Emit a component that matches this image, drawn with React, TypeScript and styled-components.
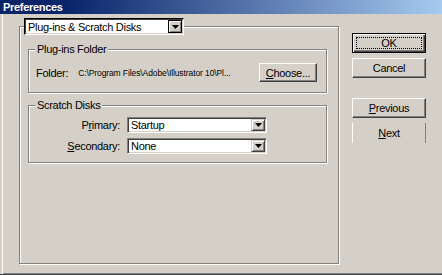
import React from 'react'
import styled, { createGlobalStyle } from 'styled-components'

const Colors = {
  Face: '#d4d0c8',
  Shadow: '#808080',
  DarkShadow: '#404040',
  Light: '#ffffff',
}

const GlobalStyle = createGlobalStyle`
  html, body {
    margin: 0;
    padding: 0;
    background: ${Colors.Face};
  }
  body {
    font-family: "Liberation Sans", Arial, sans-serif;
    font-size: 11px;
    letter-spacing: -0.3px;
    color: #000;
  }
`

const Arrow: React.FC = () => (
  <svg width="7" height="4" viewBox="0 0 7 4">
    <polygon points="0,0 7,0 3.5,4" fill="#000" />
  </svg>
)

interface ComboProps {
  value: string
  width: number
  height: number
  focused?: boolean
}

const Combo: React.FC<ComboProps> = ({ value, width, height, focused }) => (
  <ComboBox width={width} height={height} focused={focused}>
    <ComboText>{value}</ComboText>
    <ComboButton focused={focused}>
      <Arrow />
    </ComboButton>
  </ComboBox>
)

export default function App() {
  return (
    <>
      <GlobalStyle />
      <Window>
        <TitleBar>Preferences</TitleBar>
        <Body>
          <MainGroup>
            <MainLegend>
              <Combo value="Plug-ins & Scratch Disks" width={160} height={17} focused />
            </MainLegend>

            <Group>
              <GroupLegend>Plug-ins Folder</GroupLegend>
              <FolderRow>
                <span>Folder:</span>
                <PathText>C:\Program Files\Adobe\Illustrator 10\Pl...</PathText>
                <PushButton width={58} height={19}>
                  <u>C</u>hoose...
                </PushButton>
              </FolderRow>
            </Group>

            <Group spaced>
              <GroupLegend>Scratch Disks</GroupLegend>
              <DiskGrid>
                <FieldLabel>
                  P<u>r</u>imary:
                </FieldLabel>
                <Combo value="Startup" width={140} height={16} />
                <FieldLabel>
                  <u>S</u>econdary:
                </FieldLabel>
                <Combo value="None" width={140} height={16} />
              </DiskGrid>
            </Group>
          </MainGroup>

          <ButtonColumn>
            <DefaultButton>
              <FocusRect>OK</FocusRect>
            </DefaultButton>
            <PushButton width={74} height={20}>
              Cancel
            </PushButton>
            <Spacer />
            <PushButton width={74} height={20}>
              <u>P</u>revious
            </PushButton>
            <FlatButton>
              <u>N</u>ext
            </FlatButton>
          </ButtonColumn>
        </Body>
      </Window>
    </>
  )
}

const Window = styled.div`
  width: 442px;
  height: 275px;
  display: flex;
  flex-direction: column;
  background: ${Colors.Face};
  overflow: hidden;
`

const TitleBar = styled.div`
  height: 14px;
  line-height: 14px;
  padding-left: 3px;
  background: linear-gradient(to right, #0a246a 15%, #a6caf0 100%);
  color: #fff;
  font-weight: bold;
  font-size: 11px;
`

const Body = styled.div`
  flex: 1;
  display: flex;
  align-items: flex-start;
  padding: 4px 0 0 19px;
  border-bottom: 1px solid ${Colors.DarkShadow};
  box-shadow: inset 2px 0 0 ${Colors.Face}, inset 3px 0 0 ${Colors.Light},
    inset 0 -1px 0 ${Colors.Shadow};
`

const etched = `
  border: 1px solid ${Colors.Shadow};
  box-shadow: 1px 1px 0 ${Colors.Light}, inset 1px 1px 0 ${Colors.Light};
`

const MainGroup = styled.fieldset`
  ${etched}
  box-sizing: border-box;
  width: 320px;
  height: 246px;
  margin: 0;
  padding: 8px 0 0 8px;
  min-width: 0;
`

const MainLegend = styled.legend`
  padding: 0;
  margin-left: -4px;
  background: ${Colors.Face};
`

const Group = styled.fieldset<{ spaced?: boolean }>`
  ${etched}
  box-sizing: border-box;
  width: 299px;
  margin: ${(props) => (props.spaced ? '6px' : '0')} 0 0 0;
  padding: 7px 9px 10px 7px;
  min-width: 0;
`

const GroupLegend = styled.legend`
  padding: 0 2px;
  margin-left: -1px;
  line-height: 13px;
  background: ${Colors.Face};
`

const FolderRow = styled.div`
  display: flex;
  align-items: center;
`

const PathText = styled.span`
  margin-left: 10px;
  font-size: 8.5px;
  letter-spacing: -0.1px;
  flex: 1;
  white-space: nowrap;
`

const DiskGrid = styled.div`
  display: grid;
  grid-template-columns: 84px 140px;
  column-gap: 7px;
  row-gap: 5px;
  align-items: center;
  margin-top: -2px;
  margin-bottom: -2px;
`

const FieldLabel = styled.span`
  text-align: right;
`

const ComboBox = styled.div<{ width: number; height: number; focused?: boolean }>`
  box-sizing: border-box;
  width: ${(props) => props.width}px;
  height: ${(props) => props.height}px;
  display: flex;
  align-items: stretch;
  background: #fff;
  border: 1px solid;
  border-color: ${(props) =>
    props.focused
      ? `#000 ${Colors.Light} ${Colors.Light} #000`
      : `${Colors.Shadow} ${Colors.Light} ${Colors.Light} ${Colors.Shadow}`};
  box-shadow: inset 1px 1px 0 ${Colors.DarkShadow}, inset -1px -1px 0 ${Colors.Face};
  padding: 1px;
`

const ComboText = styled.span`
  flex: 1;
  padding-left: 2px;
  display: flex;
  align-items: center;
  white-space: nowrap;
  overflow: hidden;
`

const ComboButton = styled.span<{ focused?: boolean }>`
  box-sizing: border-box;
  width: 14px;
  display: flex;
  align-items: center;
  justify-content: center;
  background: ${Colors.Face};
  border: 1px solid;
  border-color: ${(props) =>
    props.focused
      ? `#000 #000 #000 #000`
      : `${Colors.Face} ${Colors.DarkShadow} ${Colors.DarkShadow} ${Colors.Face}`};
  box-shadow: inset 1px 1px 0 ${Colors.Light}, inset -1px -1px 0 ${Colors.Shadow};
`

const ButtonColumn = styled.div`
  margin: 15px 0 0 13px;
  display: flex;
  flex-direction: column;
  gap: 5px;
`

const Spacer = styled.div`
  height: 10px;
`

const PushButton = styled.div<{ width: number; height: number }>`
  box-sizing: border-box;
  width: ${(props) => props.width}px;
  height: ${(props) => props.height}px;
  display: flex;
  align-items: center;
  justify-content: center;
  margin-left: auto;
  background: ${Colors.Face};
  border: 1px solid;
  border-color: ${Colors.Light} ${Colors.DarkShadow} ${Colors.DarkShadow} ${Colors.Light};
  box-shadow: inset -1px -1px 0 ${Colors.Shadow};
`

const DefaultButton = styled.div`
  box-sizing: border-box;
  width: 74px;
  height: 20px;
  padding: 3px;
  background: ${Colors.Face};
  border: 1px solid #000;
  box-shadow: inset 1px 1px 0 ${Colors.Light}, inset -1px -1px 0 ${Colors.DarkShadow},
    inset -2px -2px 0 ${Colors.Shadow};
`

const FocusRect = styled.div`
  box-sizing: border-box;
  height: 100%;
  display: flex;
  align-items: center;
  justify-content: center;
  border: 1px dotted #000;
`

const FlatButton = styled.div`
  box-sizing: border-box;
  width: 74px;
  height: 20px;
  display: flex;
  align-items: center;
  justify-content: center;
  border-left: 1px solid ${Colors.Light};
  border-right: 1px solid ${Colors.Shadow};
`
